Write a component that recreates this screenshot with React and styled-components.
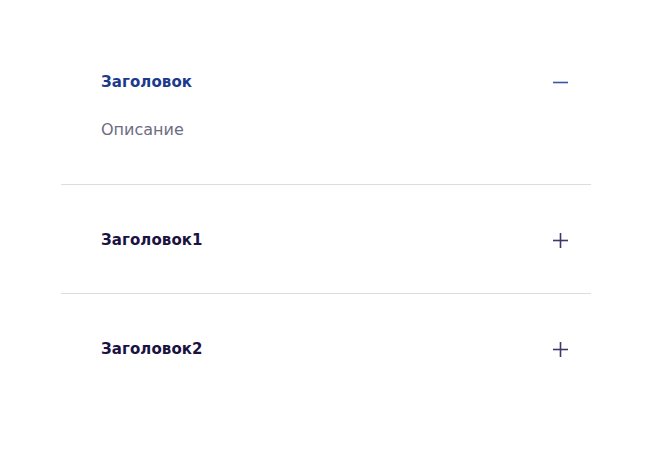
import React, { useState } from "react";
import styled, { createGlobalStyle } from "styled-components";

const Global = createGlobalStyle`
  html, body { margin: 0; padding: 0; background: #fff; }
  body { font-family: "DejaVu Sans", Verdana, sans-serif; }
`;

const Page = styled.div`
  padding: 27px 72px 0 61px;
`;

const List = styled.div`
  display: flex;
  flex-direction: column;
`;

const Item = styled.div`
  border-bottom: ${(p) => (p.$last ? "none" : "1px solid #dcdce4")};
  padding: 46px 22px 44px 40px;
`;

const Header = styled.button`
  all: unset;
  box-sizing: border-box;
  width: 100%;
  display: flex;
  align-items: center;
  justify-content: space-between;
  height: 18px;
  cursor: pointer;
`;

const Title = styled.span`
  font-size: 15px;
  font-weight: 700;
  letter-spacing: 0.1px;
  color: ${(p) => (p.$open ? "#1c3a8c" : "#1a1240")};
`;

const Desc = styled.div`
  margin-top: 29px;
  margin-bottom: 1px;
  font-size: 16px;
  line-height: 19px;
  color: #6e6c82;
`;

const Icon = ({ open }) => (
  <svg width="17" height="17" viewBox="0 0 17 17" fill="none">
    <path d="M1 8.5H16" stroke={open ? "#3a56a6" : "#3c3868"} strokeWidth="1.6" />
    {!open && <path d="M8.5 1V16" stroke="#3c3868" strokeWidth="1.6" />}
  </svg>
);

const items = [
  { title: "Заголовок", desc: "Описание" },
  { title: "Заголовок1", desc: "Описание" },
  { title: "Заголовок2", desc: "Описание" },
];

export default function App() {
  const [open, setOpen] = useState(0);
  return (
    <>
      <Global />
      <Page>
        <List>
          {items.map((it, i) => (
            <Item key={i} $last={i === items.length - 1}>
              <Header onClick={() => setOpen(open === i ? -1 : i)}>
                <Title $open={open === i}>{it.title}</Title>
                <Icon open={open === i} />
              </Header>
              {open === i && <Desc>{it.desc}</Desc>}
            </Item>
          ))}
        </List>
      </Page>
    </>
  );
}
